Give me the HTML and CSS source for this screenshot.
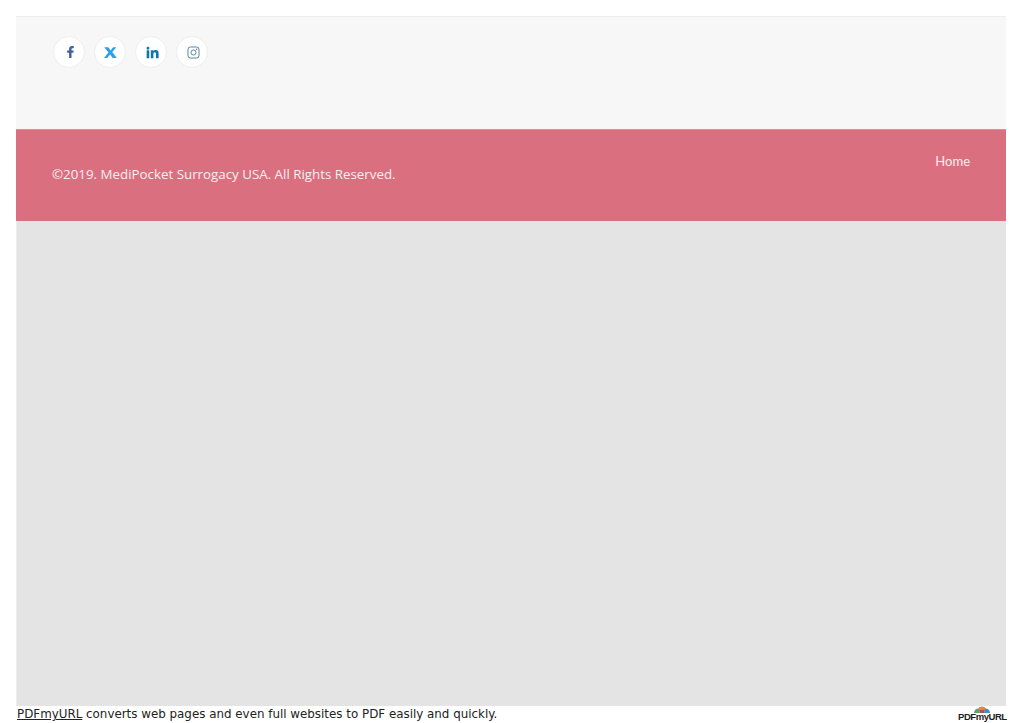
FILE: index.html
```html
<!DOCTYPE html>
<html lang="en">
<head>
<meta charset="utf-8">
<title>MediPocket Surrogacy USA</title>
<link rel="stylesheet" href="styles.css">
</head>
<body>
<main class="sheet">
  <section class="social-band">
    <ul class="social">
      <li class="social-item"><svg class="ico ico-f" viewBox="0 0 16 16"><path class="fb" d="M10 16V8.900h2.500l.4-2.900H10V4.400c0-.8.300-1.400 1.400-1.400H13V.3C12.600.2 11.700 0 10.700 0 8.300 0 6.800 1.400 6.800 4v2H4.200v2.900h2.600V16z"/></svg></li>
      <li class="social-item"><svg class="ico ico-x" viewBox="0 0 16 16"><path class="tw" d="M.3 1.500h5l2.900 3.900 3-3.900h4l-5 6 5.500 7.200h-5L7.500 10.400l-3.500 4.300H0l5.500-6.700z"/></svg></li>
      <li class="social-item"><svg class="ico ico-in" viewBox="0 0 16 16"><path class="in" d="M.8 5.200h3.200v9.800H.8zM2.400.9a1.800 1.800 0 1 1 0 3.600 1.800 1.800 0 0 1 0-3.600zM5.900 5.200H9v1.300c.5-.9 1.600-1.500 3-1.500 2.800 0 3.500 1.800 3.500 4.400V15h-3.200V10c0-1.300-.3-2.400-1.500-2.400-1.400 0-1.700 1.100-1.700 2.400v5H5.900z"/></svg></li>
      <li class="social-item"><svg class="ico ico-ig" viewBox="0 0 16 16"><g class="ig"><rect x="1.200" y="1.200" width="13.600" height="13.600" rx="3"/><circle cx="8" cy="8" r="3.100"/></g><circle class="ig-dot" cx="12" cy="4" r=".9"/></svg></li>
    </ul>
  </section>
  <section class="copy-band">
    <p class="copyright">©2019. MediPocket Surrogacy USA. All Rights Reserved.</p>
    <a class="home" href="#">Home</a>
  </section>
  <section class="blank"></section>
</main>
<footer class="credit">
  <p class="credit-text"><a class="credit-link" href="#">PDFmyURL</a> converts web pages and even full websites to PDF easily and quickly.</p>
  <div class="logo">
    <svg class="logo-mark" viewBox="0 0 16 7" width="16" height="7">
      <path class="arc-g" d="M0 7a4.500 4.500 0 0 1 4.500-4.500L6 7z"/>
      <path class="arc-b" d="M10 7l1.500-4.500A4.500 4.500 0 0 1 16 7z"/>
      <path class="arc-o" d="M4 2.500a5 5 0 0 1 8 0L10 4H6z"/>
      <path class="arc-r" d="M4.500 2.500 6 4h4l1.500-1.500L10 7H6z"/>
    </svg>
    <span class="logo-text">PDFmyURL</span>
  </div>
</footer>
</body>
</html>
```
FILE: styles.css
```css
* { box-sizing: border-box; }
html, body { margin: 0; padding: 0; }
body {
  width: 1023px;
  height: 723px;
  overflow: hidden;
  background: #fff;
  padding: 16px 17px 0 16px;
  display: flex;
  flex-direction: column;
}
.sheet {
  height: 690px;
  display: flex;
  flex-direction: column;
}
.social-band {
  height: 113px;
  background: #f7f7f8;
  border-top: 1px solid #eeeeee;
  padding: 19px 0 0 37px;
}
.social {
  list-style: none;
  margin: 0;
  padding: 0;
  display: flex;
  gap: 9px;
}
.social-item {
  width: 32px;
  height: 32px;
  border-radius: 50%;
  background: #fff;
  border: 1px solid #eeeef0;
  display: flex;
  align-items: center;
  justify-content: center;
}
.ico { display: block; }
.ico-f { width: 12px; height: 12px; margin-left: 2px; }
.ico-x { width: 13px; height: 13px; }
.ico-in { width: 13px; height: 13px; margin-left: 2px; }
.ico-ig { width: 13px; height: 13px; margin-left: 3px; }
.fb { fill: #3f5f9c; }
.tw { fill: #2d9fe8; }
.in { fill: #0e76a8; }
.ig { fill: none; stroke: #517fa4; stroke-width: 1.200; }
.ig-dot { fill: #517fa4; }
.copy-band {
  height: 92px;
  background: #da707f;
  border-top: 1px solid #e08d98;
  padding: 0 36px;
  display: flex;
  justify-content: space-between;
  align-items: flex-start;
  color: #fff;
}
.copyright {
  margin: 34px 0 0;
  font: 13.330px/20px "Open Sans", sans-serif;
  color: #fbeef0;
}
.home {
  margin-top: 21px;
  font: 13px/20px Lato, sans-serif;
  color: #fbeef0;
  text-decoration: none;
}
.blank {
  flex: 1;
  background: #e4e4e4;
  border-left: 1px solid #ececec;
}
.credit {
  flex: 1;
  display: flex;
  justify-content: space-between;
  align-items: flex-start;
  padding-left: 1px;
}
.credit-text {
  margin: 0;
  font: 11.880px/17px "DejaVu Sans", Verdana, sans-serif;
  color: #222;
}
.credit-link { color: #222; text-decoration: underline; }
.logo {
  position: relative;
  width: 48px;
  height: 17px;
}
.logo-mark {
  position: absolute;
  left: 16px;
  top: 0;
}
.logo-text {
  position: absolute;
  left: 0;
  top: 5px;
  font: bold 9.500px/12px "Liberation Sans", Arial, sans-serif;
  letter-spacing: -0.45px;
  color: #1c1c1c;
  white-space: nowrap;
}
.arc-g { fill: #5aa469; }
.arc-b { fill: #3f8fb5; }
.arc-o { fill: #d9874f; }
.arc-r { fill: #b84a5e; }
```
